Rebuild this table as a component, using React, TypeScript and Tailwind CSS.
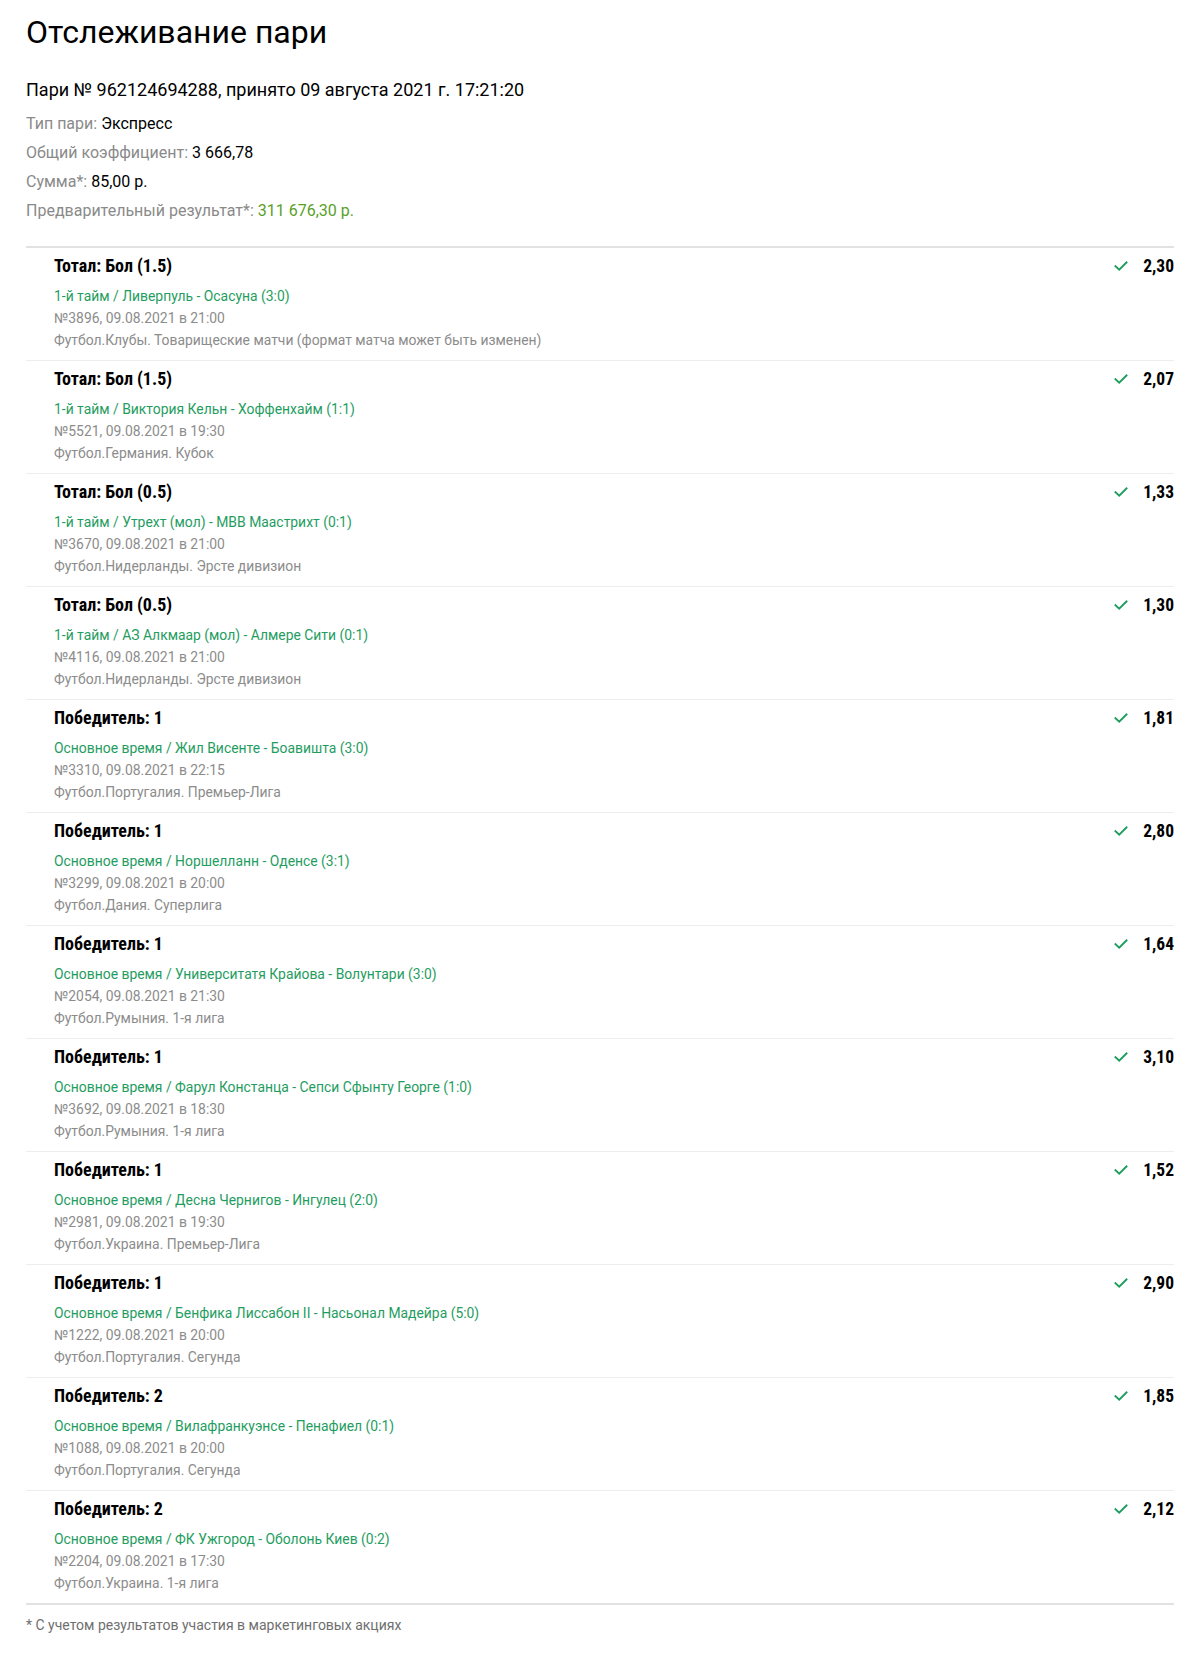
type Bet = {
  title: string;
  event: string;
  num: string;
  league: string;
  odds: string;
};

const bets: Bet[] = [
  { title: 'Тотал: Бол (1.5)', event: '1-й тайм / Ливерпуль - Осасуна (3:0)', num: '№3896, 09.08.2021 в 21:00', league: 'Футбол.Клубы. Товарищеские матчи (формат матча может быть изменен)', odds: '2,30' },
  { title: 'Тотал: Бол (1.5)', event: '1-й тайм / Виктория Кельн - Хоффенхайм (1:1)', num: '№5521, 09.08.2021 в 19:30', league: 'Футбол.Германия. Кубок', odds: '2,07' },
  { title: 'Тотал: Бол (0.5)', event: '1-й тайм / Утрехт (мол) - МВВ Маастрихт (0:1)', num: '№3670, 09.08.2021 в 21:00', league: 'Футбол.Нидерланды. Эрсте дивизион', odds: '1,33' },
  { title: 'Тотал: Бол (0.5)', event: '1-й тайм / АЗ Алкмаар (мол) - Алмере Сити (0:1)', num: '№4116, 09.08.2021 в 21:00', league: 'Футбол.Нидерланды. Эрсте дивизион', odds: '1,30' },
  { title: 'Победитель: 1', event: 'Основное время / Жил Висенте - Боавишта (3:0)', num: '№3310, 09.08.2021 в 22:15', league: 'Футбол.Португалия. Премьер-Лига', odds: '1,81' },
  { title: 'Победитель: 1', event: 'Основное время / Норшелланн - Оденсе (3:1)', num: '№3299, 09.08.2021 в 20:00', league: 'Футбол.Дания. Суперлига', odds: '2,80' },
  { title: 'Победитель: 1', event: 'Основное время / Университатя Крайова - Волунтари (3:0)', num: '№2054, 09.08.2021 в 21:30', league: 'Футбол.Румыния. 1-я лига', odds: '1,64' },
  { title: 'Победитель: 1', event: 'Основное время / Фарул Констанца - Сепси Сфынту Георге (1:0)', num: '№3692, 09.08.2021 в 18:30', league: 'Футбол.Румыния. 1-я лига', odds: '3,10' },
  { title: 'Победитель: 1', event: 'Основное время / Десна Чернигов - Ингулец (2:0)', num: '№2981, 09.08.2021 в 19:30', league: 'Футбол.Украина. Премьер-Лига', odds: '1,52' },
  { title: 'Победитель: 1', event: 'Основное время / Бенфика Лиссабон II - Насьонал Мадейра (5:0)', num: '№1222, 09.08.2021 в 20:00', league: 'Футбол.Португалия. Сегунда', odds: '2,90' },
  { title: 'Победитель: 2', event: 'Основное время / Вилафранкуэнсе - Пенафиел (0:1)', num: '№1088, 09.08.2021 в 20:00', league: 'Футбол.Португалия. Сегунда', odds: '1,85' },
  { title: 'Победитель: 2', event: 'Основное время / ФК Ужгород - Оболонь Киев (0:2)', num: '№2204, 09.08.2021 в 17:30', league: 'Футбол.Украина. 1-я лига', odds: '2,12' },
];

function Check() {
  return (
    <svg width="14" height="10" viewBox="0 0 14 10" fill="none" className="shrink-0">
      <path d="M1.5 5.2 L5.2 8.6 L12.5 1.4" stroke="#1f9d5f" strokeWidth="1.9" strokeLinecap="square" />
    </svg>
  );
}

function Row({ bet }: { bet: Bet }) {
  return (
    <div className="flex justify-between pl-[28px] pt-[6px] pb-[9px]">
      <div className="flex flex-col">
        <div className="text-[18px] leading-[24px] font-bold text-black [font-stretch:condensed]">{bet.title}</div>
        <div className="mt-[7px] text-[13.9px] leading-[22px] text-[#1f9d5f]">{bet.event}</div>
        <div className="text-[13.9px] leading-[22px] text-[#8c8c8c]">{bet.num}</div>
        <div className="text-[13.9px] leading-[22px] text-[#8c8c8c]">{bet.league}</div>
      </div>
      <div className="flex h-[24px] items-center gap-[15px]">
        <Check />
        <div className="text-[17.5px] leading-[24px] font-bold text-black [font-stretch:condensed]">{bet.odds}</div>
      </div>
    </div>
  );
}

export default function App() {
  return (
    <div className="min-h-[1665px] bg-white px-[26px] font-['Roboto',sans-serif] [font-stretch:normal]">
      <h1 className="pt-[14px] text-[32px] leading-[36px] font-normal text-black">Отслеживание пари</h1>
      <div className="mt-[26px] text-[18px] leading-[28px] text-black">
        Пари № 962124694288, принято 09 августа 2021 г. 17:21:20
      </div>
      <div className="mt-[5px] flex flex-col text-[16px] leading-[29px] text-[#8a8a8a]">
        <div>
          Тип пари: <span className="text-black">Экспресс</span>
        </div>
        <div>
          Общий коэффициент: <span className="text-black">3 666,78</span>
        </div>
        <div>
          Сумма*: <span className="text-black">85,00 р.</span>
        </div>
        <div>
          Предварительный результат*: <span className="text-[#5a9f28]">311 676,30 р.</span>
        </div>
      </div>
      <div className="mt-[21px] flex flex-col divide-y divide-[#ededed] border-y-2 border-[#e2e2e2]">
        {bets.map((b, i) => (
          <Row key={i} bet={b} />
        ))}
      </div>
      <div className="mt-[10px] text-[14px] leading-[20px] text-[#6f6f6f]">
        * С учетом результатов участия в маркетинговых акциях
      </div>
    </div>
  );
}
